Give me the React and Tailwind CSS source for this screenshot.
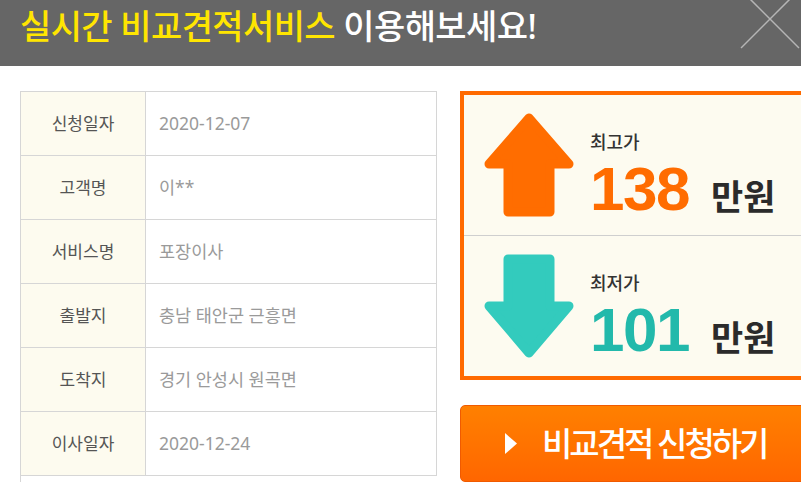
import React from "react";

const rows = [
  ["신청일자", "2020-12-07"],
  ["고객명", "이**"],
  ["서비스명", "포장이사"],
  ["출발지", "충남 태안군 근흥면"],
  ["도착지", "경기 안성시 원곡면"],
  ["이사일자", "2020-12-24"],
];

const KR = { fontFamily: '"Noto Sans", "Noto Sans CJK KR", sans-serif' };
const NUM = { fontFamily: '"Liberation Sans", Arial, sans-serif' };

function UpArrow() {
  return (
    <svg width="90" height="104" viewBox="0 0 90 104">
      <path
        d="M45 5 L85 51 L66 51 L66 99 L24 99 L24 51 L5 51 Z"
        fill="#ff6d00"
        stroke="#ff6d00"
        strokeWidth="9"
        strokeLinejoin="round"
      />
    </svg>
  );
}

function DownArrow() {
  return (
    <svg width="90" height="104" viewBox="0 0 90 104">
      <path
        d="M45 99 L85 52 L66 52 L66 5 L24 5 L24 52 L5 52 Z"
        fill="#33cbbd"
        stroke="#33cbbd"
        strokeWidth="9"
        strokeLinejoin="round"
      />
    </svg>
  );
}

function PriceSection({ arrow, label, value, color }) {
  return (
    <div className="h-[140px] flex items-center pl-[20px] gap-[16px]">
      {arrow}
      <div className="flex flex-col mt-[22px]">
        <div className="text-[18px] leading-none text-[#333] font-medium" style={KR}>
          {label}
        </div>
        <div className="flex items-baseline mt-[7px]">
          <span
            className={`text-[62px] leading-none font-bold tracking-[-1.5px] ${color}`}
            style={NUM}
          >
            {value}
          </span>
          <span className="text-[35px] leading-none font-bold text-[#2b2b2b] ml-[22px]" style={KR}>
            만원
          </span>
        </div>
      </div>
    </div>
  );
}

export default function App() {
  return (
    <div className="w-[801px] h-[493px] overflow-hidden bg-white relative" style={KR}>
      <div className="h-[66px] bg-[#666666] relative overflow-hidden flex items-center pl-[20px]">
        <div className="text-[34px] leading-none font-medium tracking-[-0.6px] -mt-[14px]" style={KR}>
          <span className="text-[#ffe500]">실시간 비교견적서비스</span>{" "}
          <span className="text-white">이용해보세요!</span>
        </div>
        <svg className="absolute left-[740px] -top-[11px]" width="60" height="60" viewBox="0 0 60 60">
          <line x1="1" y1="1" x2="59" y2="59" stroke="#b5b5b5" strokeWidth="1.5" />
          <line x1="59" y1="1" x2="1" y2="59" stroke="#b5b5b5" strokeWidth="1.5" />
        </svg>
      </div>

      <div className="flex pl-[20px] pt-[25px] gap-[23px]">
        <div className="w-[417px] shrink-0 border-t border-l border-[#d6d6d6]">
          {rows.map(([k, v]) => (
            <div key={k} className="flex h-[64px] border-b border-[#d6d6d6]">
              <div className="w-[125px] shrink-0 bg-[#fdfbef] border-r border-[#d6d6d6] flex items-center justify-center text-[17px] text-[#555]">
                {k}
              </div>
              <div className="flex-1 border-r border-[#d6d6d6] flex items-center pl-[13px] text-[17.5px] text-[#9a9a9a]">
                {v}
              </div>
            </div>
          ))}
        </div>

        <div className="w-[380px] shrink-0 flex flex-col">
          <div className="border-[4px] border-[#ff6a00] bg-[#fdfbf0]">
            <PriceSection arrow={<UpArrow />} label="최고가" value="138" color="text-[#ff6c00]" />
            <div className="h-px bg-[#cfcfcf]" />
            <PriceSection arrow={<DownArrow />} label="최저가" value="101" color="text-[#22b9ab]" />
          </div>
          <button className="mt-[25px] h-[77px] rounded-[5px] border border-[#f05a00] bg-gradient-to-b from-[#ff8000] to-[#ff6600] flex items-center pl-[44px]">
            <svg width="12" height="21" viewBox="0 0 12 21">
              <path d="M0 0 L12 10.5 L0 21 Z" fill="white" />
            </svg>
            <span className="ml-[25px] text-white text-[33px] leading-none font-medium tracking-[-3px]" style={KR}>
              비교견적 신청하기
            </span>
          </button>
        </div>
      </div>
    </div>
  );
}
